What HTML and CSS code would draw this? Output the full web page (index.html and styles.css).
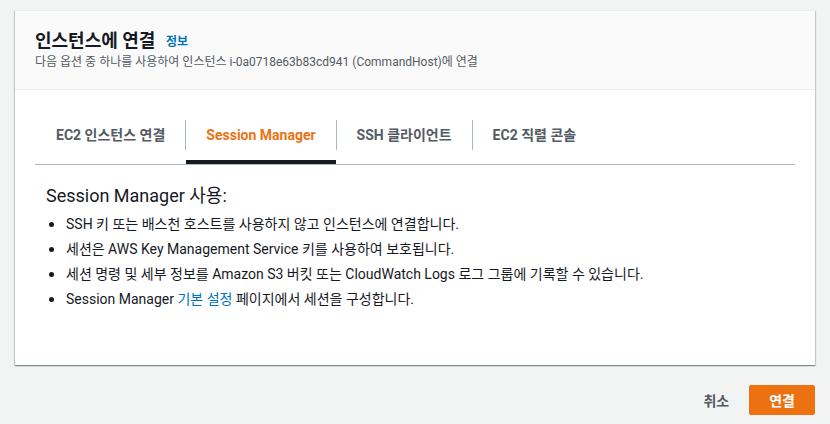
FILE: index.html
```html
<!DOCTYPE html>
<html lang="ko">
<head>
    <meta charset="UTF-8">
    <meta name="viewport" content="width=device-width, initial-scale=1.0">
    <title>인스턴스에 연결</title>
    <link rel="stylesheet" href="styles.css">
</head>
<body>
    <div class="modal">
        <div class="modal-header">
            <h2 class="title">인스턴스에 연결 <a href="#" class="info-link">정보</a></h2>
            <p class="subtitle">다음 옵션 중 하나를 사용하여 인스턴스 i-0a0718e63b83cd941 (CommandHost)에 연결</p>
        </div>

        <div class="modal-body">
            <ul class="tabs">
                <li class="tab"><span class="tab-label">EC2 인스턴스 연결</span></li>
                <li class="tab active"><span class="tab-label">Session Manager</span></li>
                <li class="tab"><span class="tab-label">SSH 클라이언트</span></li>
                <li class="tab"><span class="tab-label">EC2 직렬 콘솔</span></li>
            </ul>

            <div class="tab-content">
                <h3 class="section-title">Session Manager 사용:</h3>
                <ul class="bullets">
                    <li>SSH 키 또는 배스천 호스트를 사용하지 않고 인스턴스에 연결합니다.</li>
                    <li>세션은 AWS Key Management Service 키를 사용하여 보호됩니다.</li>
                    <li>세션 명령 및 세부 정보를 Amazon S3 버킷 또는 CloudWatch Logs 로그 그룹에 기록할 수 있습니다.</li>
                    <li>Session Manager <a href="#" class="link">기본 설정</a> 페이지에서 세션을 구성합니다.</li>
                </ul>
            </div>
        </div>
    </div>

    <div class="actions">
        <button type="button" class="btn-cancel">취소</button>
        <button type="button" class="btn-primary">연결</button>
    </div>
</body>
</html>
```

FILE: styles.css
```css
body {
    margin: 0;
    padding: 10px 15px;
    background-color: #f2f3f3;
    font-family: Roboto, "Noto Sans CJK KR", sans-serif;
    color: #16191f;
}

.modal {
    background-color: #fff;
    border-top: 1px solid #eaeded;
    box-shadow: 0 1px 1px 0 rgba(0, 28, 36, 0.3), 1px 1px 1px 0 rgba(0, 28, 36, 0.15), -1px 1px 1px 0 rgba(0, 28, 36, 0.15);
}

.modal-header {
    background-color: #fafafa;
    padding: 19px 20px 19px;
    border-bottom: 1px solid #eaeded;
}

.title {
    margin: 0;
    font-size: 18px;
    line-height: 22px;
    font-weight: bold;
}

.info-link {
    margin-left: 6px;
    font-size: 12px;
    font-weight: bold;
    color: #0073bb;
    text-decoration: none;
    vertical-align: 1px;
}

.subtitle {
    margin: 1px 0 0;
    font-size: 12px;
    line-height: 16px;
    color: #545b64;
}

.modal-body {
    padding: 20px 20px;
}

.tabs {
    display: flex;
    margin: 0;
    padding: 0;
    list-style: none;
    border-bottom: 1px solid #aab7b8;
}

.tab {
    position: relative;
    padding: 10px 0 14px;
}

.tab-label {
    display: block;
    padding: 5px 20px;
    font-size: 14px;
    line-height: 20px;
    font-weight: bold;
    color: #545b64;
}

.tab:first-child .tab-label {
    padding-left: 21px;
}

.tab + .tab .tab-label {
    border-left: 1px solid #aab7b8;
}

.tab.active .tab-label {
    color: #ec7211;
}

.tab.active::after {
    content: "";
    position: absolute;
    left: 1px;
    right: 0;
    bottom: 0;
    height: 4px;
    background-color: #16191f;
}

.tab-content {
    padding: 20px 11px 36px;
}

.section-title {
    margin: 0;
    font-size: 18px;
    line-height: 22px;
    font-weight: normal;
}

.bullets {
    margin: 7px 0 0;
    padding-left: 20px;
    list-style: none;
    font-size: 14px;
    line-height: 20px;
}

.bullets li {
    position: relative;
}

.bullets li::before {
    content: "";
    position: absolute;
    left: -17px;
    top: 8px;
    width: 5px;
    height: 5px;
    border-radius: 50%;
    background-color: #16191f;
}

.bullets li + li {
    margin-top: 5px;
}

.link {
    color: #0073bb;
    text-decoration: none;
}

.actions {
    display: flex;
    justify-content: flex-end;
    margin-top: 20px;
}

.actions button {
    height: 30px;
    padding: 0 20px;
    border: none;
    border-radius: 2px;
    font-family: Roboto, "Noto Sans CJK KR", sans-serif;
    font-size: 14px;
    font-weight: bold;
    cursor: pointer;
}

.btn-cancel {
    background: none;
    color: #545b64;
}

.btn-primary {
    background-color: #ec7211;
    color: #fff;
}
```
